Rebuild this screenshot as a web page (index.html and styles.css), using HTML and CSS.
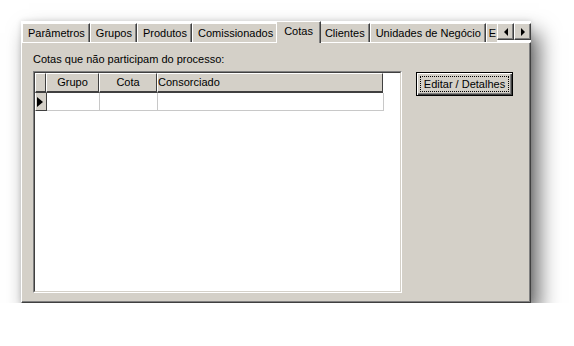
FILE: index.html
```
<!DOCTYPE html>
<html lang="pt">
<head>
    <meta charset="UTF-8">
    <title>Cotas</title>
    <link rel="stylesheet" href="styles.css">
</head>
<body>
    <div class="window">
        <div class="tabstrip">
            <div class="tabs">
                <div class="tab">Parâmetros</div>
                <div class="tab">Grupos</div>
                <div class="tab">Produtos</div>
                <div class="tab">Comissionados</div>
                <div class="tab active">Cotas</div>
                <div class="tab">Clientes</div>
                <div class="tab">Unidades de Negócio</div>
                <div class="tab last">E</div>
            </div>
            <div class="scroller">
                <div class="arrow"><span class="tri left"></span></div>
                <div class="arrow"><span class="tri right"></span></div>
            </div>
        </div>

        <div class="panel">
            <div class="caption">Cotas que não participam do processo:</div>
            <div class="content">
                <div class="grid">
                    <div class="grid-inner">
                        <div class="row head">
                            <div class="cell ind"></div>
                            <div class="cell c-grupo">Grupo</div>
                            <div class="cell c-cota">Cota</div>
                            <div class="cell c-cons">Consorciado</div>
                        </div>
                        <div class="row data">
                            <div class="cell ind"><span class="pointer"></span></div>
                            <div class="cell c-grupo"></div>
                            <div class="cell c-cota"></div>
                            <div class="cell c-cons"></div>
                        </div>
                    </div>
                </div>
                <div class="btn default"><span class="focus">Editar / Detalhes</span></div>
            </div>
        </div>
    </div>
</body>
</html>
```

FILE: styles.css
```
body {
    margin: 0;
    background: #fff;
    font-family: "Liberation Sans", Arial, sans-serif;
    font-size: 11px;
    color: #000;
}

.window {
    width: 510px;
    margin: 21px 0 0 21px;
    box-shadow: 8px 12px 20px rgba(0, 0, 0, 0.6), 0 0 5px rgba(0, 0, 0, 0.14);
}

/* tab strip */
.tabstrip {
    display: flex;
    height: 22px;
    position: relative;
    z-index: 1;
}

.tabs {
    flex: 1;
    display: flex;
    align-items: flex-start;
    overflow: hidden;
    padding-left: 1px;
    height: 22px;
}

.tab {
    flex: none;
    margin-top: 2px;
    height: 17px;
    padding: 1px 4px 0 5px;
    line-height: 17px;
    background: #d4d0c8;
    border-top: 1px solid #fff;
    border-left: 1px solid #fff;
    border-right: 1px solid #404040;
    box-shadow: inset -1px 0 #808080;
    white-space: nowrap;
}

.tab.active {
    position: relative;
    z-index: 2;
    margin: 0 -2px;
    height: 20px;
    padding: 1px 7px 0 7px;
}

.tab.last {
    flex: 1;
    padding-left: 2px;
    padding-right: 0;
    border-right: none;
    box-shadow: none;
}

.scroller {
    display: flex;
    margin-top: 2px;
    height: 17px;
}

.arrow {
    width: 15px;
    height: 15px;
    background: #d4d0c8;
    border-top: 1px solid #fff;
    border-left: 1px solid #fff;
    border-right: 1px solid #404040;
    border-bottom: 1px solid #404040;
    box-shadow: inset -1px -1px #808080;
    display: flex;
    align-items: center;
    justify-content: center;
}

.tri {
    width: 0;
    height: 0;
    border-top: 4px solid transparent;
    border-bottom: 4px solid transparent;
}

.tri.left { border-right: 4px solid #000; }
.tri.right { border-left: 4px solid #000; }

/* page body */
.panel {
    margin-top: -1px;
    height: 249px;
    padding: 10px 11px 0 11px;
    background: #d4d0c8;
    border-top: 1px solid #fff;
    border-left: 1px solid #fff;
    border-right: 1px solid #404040;
    border-bottom: 1px solid #404040;
    box-shadow: inset -1px -1px #808080;
}

.caption {
    line-height: 13px;
    margin-bottom: 5px;
}

.content {
    display: flex;
    align-items: flex-start;
}

/* grid */
.grid {
    width: 367px;
    height: 220px;
    border-top: 1px solid #808080;
    border-left: 1px solid #808080;
    border-right: 1px solid #fff;
    border-bottom: 1px solid #fff;
}

.grid-inner {
    height: 218px;
    background: #fff;
    border-top: 1px solid #404040;
    border-left: 1px solid #404040;
    border-right: 1px solid #d4d0c8;
    border-bottom: 1px solid #d4d0c8;
}

.row {
    display: flex;
}

.head .cell {
    height: 17px;
    line-height: 17px;
    background: #d4d0c8;
    border-top: 1px solid #fff;
    border-left: 1px solid #fff;
    border-right: 1px solid #404040;
    border-bottom: 2px solid #404040;
    text-align: center;
}

.data .cell {
    height: 17px;
    border-right: 1px solid #c8c8c8;
    border-bottom: 1px solid #c8c8c8;
}

.cell { flex: none; }
.head .ind { width: 9px; }
.head .c-grupo { width: 51px; }
.head .c-cota { width: 56px; }
.head .c-cons { width: 224px; text-align: left; }

.data .ind {
    width: 10px;
    background: #d4d0c8;
    border-left: 1px solid #fff;
    border-right: 1px solid #404040;
    border-bottom: 1px solid #404040;
    display: flex;
    align-items: center;
}

.data .c-grupo { width: 52px; }
.data .c-cota { width: 57px; }
.data .c-cons { width: 225px; }

.pointer {
    margin-left: 1px;
    width: 0;
    height: 0;
    border-top: 5px solid transparent;
    border-bottom: 5px solid transparent;
    border-left: 6px solid #000;
}

/* button */
.btn {
    margin: 1px 0 0 14px;
    width: 95px;
    height: 22px;
    border: 1px solid #000;
    background: #d4d0c8;
    box-shadow: inset 1px 1px #fff, inset -1px -1px #404040, inset -2px -2px #808080;
    display: flex;
    align-items: center;
    justify-content: center;
}

.focus {
    width: 87px;
    height: 14px;
    line-height: 14px;
    text-align: center;
    border: 1px dotted #000;
}
```
